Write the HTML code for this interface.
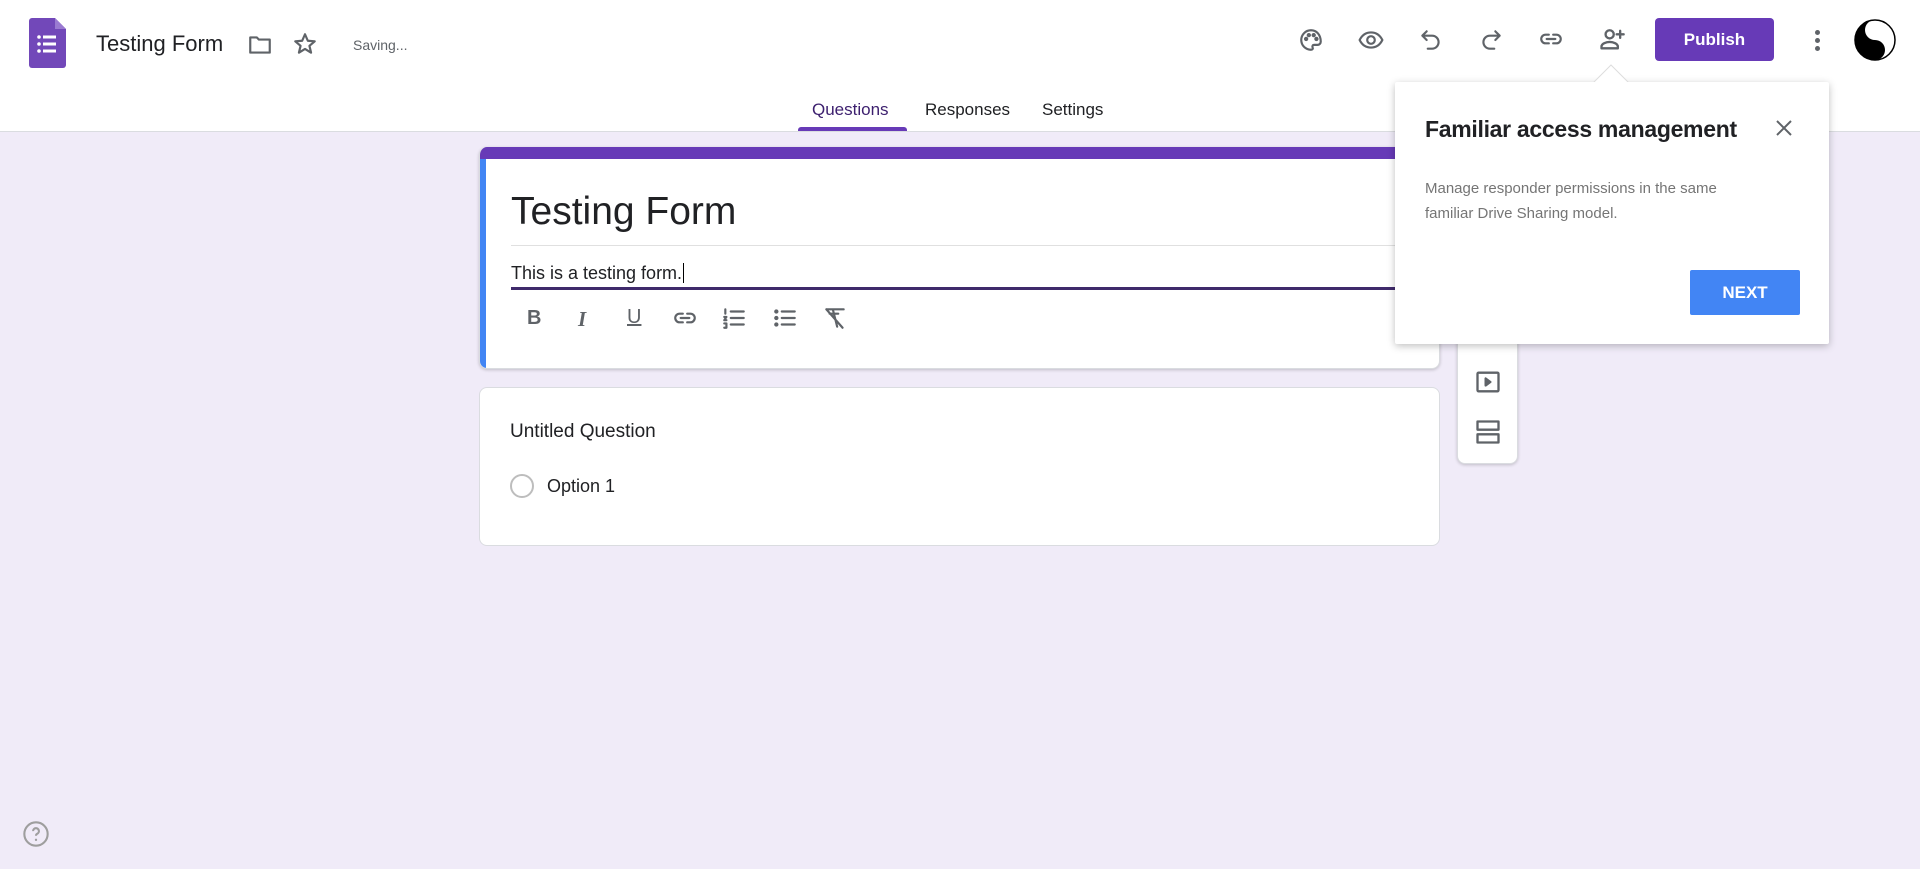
<!DOCTYPE html>
<html><head><meta charset="utf-8"><style>
*{box-sizing:border-box;margin:0;padding:0}
body{width:1920px;height:869px;overflow:hidden;background:#f0ebf8;font-family:"Liberation Sans",Arial,sans-serif;position:relative;color:#202124}
.hdr{position:absolute;left:0;top:0;width:1920px;height:132px;background:#fff;border-bottom:1px solid #dadce0}
.abs{position:absolute}
svg.i{position:absolute;fill:none;stroke:#5f6368;stroke-width:2;stroke-linecap:round;stroke-linejoin:round}
.card{position:absolute;background:#fff;border-radius:8px;border:1px solid #dadce0}
</style></head><body>
<div class="hdr">
 <svg class="abs" style="left:29px;top:18px" width="37" height="50" viewBox="0 0 37 50"><path d="M3 0h23l11 11v36a3 3 0 0 1-3 3H3a3 3 0 0 1-3-3V3a3 3 0 0 1 3-3z" fill="#7248b9"/><path d="M26 0l11 11H26z" fill="#9a7ad1"/><g fill="#fff"><circle cx="10" cy="19" r="1.8"/><circle cx="10" cy="26" r="1.8"/><circle cx="10" cy="33" r="1.8"/><rect x="14" y="17.5" width="13" height="3"/><rect x="14" y="24.5" width="13" height="3"/><rect x="14" y="31.5" width="13" height="3"/></g></svg>
 <div class="abs" style="left:96px;top:31px;font-size:22px;color:#202124">Testing Form</div>
 <svg class="i" style="left:247px;top:32px" width="26" height="26" viewBox="0 0 24 24"><path d="M3 5h6l2 2h10v12H3z"/></svg>
 <svg class="i" style="left:292px;top:31px" width="26" height="26" viewBox="0 0 24 24"><path d="M12 3l2.6 6 6.4.5-4.9 4.2 1.5 6.3L12 16.6 6.4 20l1.5-6.3L3 9.5 9.4 9z"/></svg>
 <div class="abs" style="left:353px;top:37px;font-size:14px;color:#5f6368">Saving...</div>
 <svg class="i" style="left:1298px;top:27px" width="26" height="26" viewBox="0 0 24 24"><path d="M12 3a9 9 0 0 0 0 18c1.5 0 2-1 1.5-2-.6-1.2 0-2.5 1.5-2.5H18a3 3 0 0 0 3-3C21 7 17 3 12 3z"/><circle cx="7.5" cy="11" r="1" fill="#5f6368"/><circle cx="10" cy="7.5" r="1" fill="#5f6368"/><circle cx="14.5" cy="7.5" r="1" fill="#5f6368"/><circle cx="17" cy="11" r="1" fill="#5f6368"/></svg>
 <svg class="i" style="left:1358px;top:27px" width="26" height="26" viewBox="0 0 24 24"><path d="M1.5 12C4 7 8 5 12 5s8 2 10.5 7c-2.5 5-6.5 7-10.5 7S4 17 1.5 12z"/><circle cx="12" cy="12" r="3.5"/></svg>
 <svg class="i" style="left:1418px;top:27px" width="26" height="26" viewBox="0 0 24 24"><path d="M8 4L4 8l4 4M4 8h9a6 6 0 0 1 0 12H9"/></svg>
 <svg class="i" style="left:1478px;top:27px" width="26" height="26" viewBox="0 0 24 24"><path d="M16 4l4 4-4 4M20 8h-9a6 6 0 0 0 0 12h4"/></svg>
 <svg class="i" style="left:1538px;top:26px" width="26" height="26" viewBox="0 0 24 24"><path d="M10 8H7a4 4 0 0 0 0 8h3M14 8h3a4 4 0 0 1 0 8h-3M8 12h8"/></svg>
 <svg class="i" style="left:1598px;top:25px" width="28" height="28" viewBox="0 0 24 24"><circle cx="10" cy="8" r="3.5"/><path d="M3 20v-1.5c0-2.5 4-4 7-4s7 1.5 7 4V20zM19 5v6M16 8h6"/></svg>
 <div class="abs" style="left:1655px;top:18px;width:119px;height:43px;background:#673ab7;border-radius:4px;color:#fff;font-size:17px;font-weight:bold;text-align:center;line-height:43px">Publish</div>
 <div class="abs" style="left:1815px;top:30px;width:5px;height:5px;border-radius:50%;background:#5f6368;box-shadow:0 8px 0 #5f6368,0 16px 0 #5f6368"></div>
 <svg class="abs" style="left:1854px;top:18px" width="42" height="44" viewBox="-21 -21 42 42"><circle r="20" fill="#fff" stroke="#000" stroke-width="1.5"/><path d="M0-20a20 20 0 0 0 0 40a10 10 0 0 0 0-20a10 10 0 0 1 0-20z" fill="#000"/><circle cy="-10" r="3" fill="#fff"/><circle cy="10" r="3" fill="#000"/></svg>
 <div class="abs" style="left:812px;top:100px;font-size:17px;color:#3c1f6e">Questions</div>
 <div class="abs" style="left:925px;top:100px;font-size:17px;color:#202124">Responses</div>
 <div class="abs" style="left:1042px;top:100px;font-size:17px;color:#202124">Settings</div>
 <div class="abs" style="left:798px;top:127px;width:109px;height:4px;background:#673ab7;border-radius:3px 3px 0 0"></div>
</div>

<div class="card" style="left:479px;top:147px;width:961px;height:222px;overflow:hidden;border-top:none;box-shadow:0 1px 3px rgba(0,0,0,.2)">
 <div class="abs" style="left:0;top:0;width:961px;height:12px;background:#673ab7"></div>
 <div class="abs" style="left:0;top:12px;width:6px;height:210px;background:#4285f4"></div>
 <div class="abs" style="left:31px;top:43px;font-size:39px;color:#202124">Testing Form</div>
 <div class="abs" style="left:31px;top:98px;width:920px;height:1px;background:#e0e0e0"></div>
 <div class="abs" style="left:31px;top:116px;font-size:18px;color:#202124">This is a testing form.<span style="border-left:1px solid #000;margin-left:1px"></span></div>
 <div class="abs" style="left:31px;top:140px;width:920px;height:3px;background:#3f2a6b"></div>
 <div class="abs" style="left:47px;top:160px;font-size:20px;font-weight:bold;color:#5f6368">B</div>
 <div class="abs" style="left:98px;top:160px;font-size:21px;font-style:italic;font-family:'Liberation Serif',serif;font-weight:bold;color:#5f6368">I</div>
 <div class="abs" style="left:147px;top:159px;font-size:20px;text-decoration:underline;color:#5f6368">U</div>
 <svg class="i" style="left:192px;top:158px" width="26" height="26" viewBox="0 0 24 24"><path d="M10 8H7a4 4 0 0 0 0 8h3M14 8h3a4 4 0 0 1 0 8h-3M8 12h8"/></svg>
 <svg class="i" style="left:241px;top:158px" width="26" height="26" viewBox="0 0 24 24"><path d="M9 6h12M9 12h12M9 18h12M4 4v4M3 11h2l-2 3h2M3 17h2v4H3"/></svg>
 <svg class="i" style="left:292px;top:158px" width="26" height="26" viewBox="0 0 24 24"><path d="M9 6h12M9 12h12M9 18h12"/><circle cx="4" cy="6" r="1" fill="#5f6368"/><circle cx="4" cy="12" r="1" fill="#5f6368"/><circle cx="4" cy="18" r="1" fill="#5f6368"/></svg>
 <svg class="i" style="left:342px;top:158px" width="26" height="26" viewBox="0 0 24 24"><path d="M4 4h16M10 4l4 16M4 4l15 17M7 8l8 0"/></svg>
</div>

<div class="card" style="left:1457px;top:300px;width:61px;height:164px;box-shadow:0 1px 3px rgba(0,0,0,.2)">
 <svg class="i" style="left:16px;top:67px" width="28" height="28" viewBox="0 0 24 24"><rect x="3" y="4" width="18" height="16" rx="1"/><path d="M10 9v6l4-3z" fill="#5f6368"/></svg>
 <svg class="i" style="left:16px;top:117px" width="28" height="28" viewBox="0 0 24 24"><rect x="3" y="3" width="18" height="7"/><rect x="3" y="14" width="18" height="7"/></svg>
</div>

<div class="card" style="left:479px;top:387px;width:961px;height:159px">
 <div class="abs" style="left:30px;top:33px;font-size:19px;color:#202124">Untitled Question</div>
 <div class="abs" style="left:30px;top:86px;width:24px;height:24px;border:2px solid #bdbdbd;border-radius:50%"></div>
 <div class="abs" style="left:67px;top:88px;font-size:18px;color:#202124">Option 1</div>
</div>

<div class="abs" style="left:1395px;top:82px;width:434px;height:262px;background:#fff;border-radius:2px;box-shadow:0 2px 8px rgba(0,0,0,.25)">
 <div class="abs" style="left:30px;top:34px;font-size:23px;font-weight:bold;color:#202124;letter-spacing:-.3px">Familiar access management</div>
 <svg class="abs" style="left:379px;top:36px" width="20" height="20" viewBox="0 0 20 20"><path d="M3 3l14 14M17 3L3 17" stroke="#5f6368" stroke-width="2"/></svg>
 <div class="abs" style="left:30px;top:94px;font-size:15px;line-height:25px;color:#757575;width:380px">Manage responder permissions in the same<br>familiar Drive Sharing model.</div>
 <div class="abs" style="left:295px;top:188px;width:110px;height:45px;background:#4285f4;border-radius:2px;color:#fff;font-size:17px;font-weight:bold;text-align:center;line-height:45px">NEXT</div>
</div>
<svg class="abs" style="left:1593px;top:64px" width="36" height="20" viewBox="0 0 36 20"><path d="M0 19L18 1l18 18" fill="#fff" stroke="#ddd" stroke-width="1"/><rect x="0" y="18" width="36" height="3" fill="#fff"/></svg>

<svg class="abs" style="left:22px;top:820px" width="28" height="28" viewBox="0 0 24 24"><circle cx="12" cy="12" r="10" fill="none" stroke="#9e9e9e" stroke-width="1.8"/><path d="M9.5 9.5a2.5 2.5 0 1 1 3.5 2.3c-.8.4-1 1-1 1.7" fill="none" stroke="#9e9e9e" stroke-width="1.8"/><circle cx="12" cy="17" r="1" fill="#9e9e9e"/></svg>
</body></html>
